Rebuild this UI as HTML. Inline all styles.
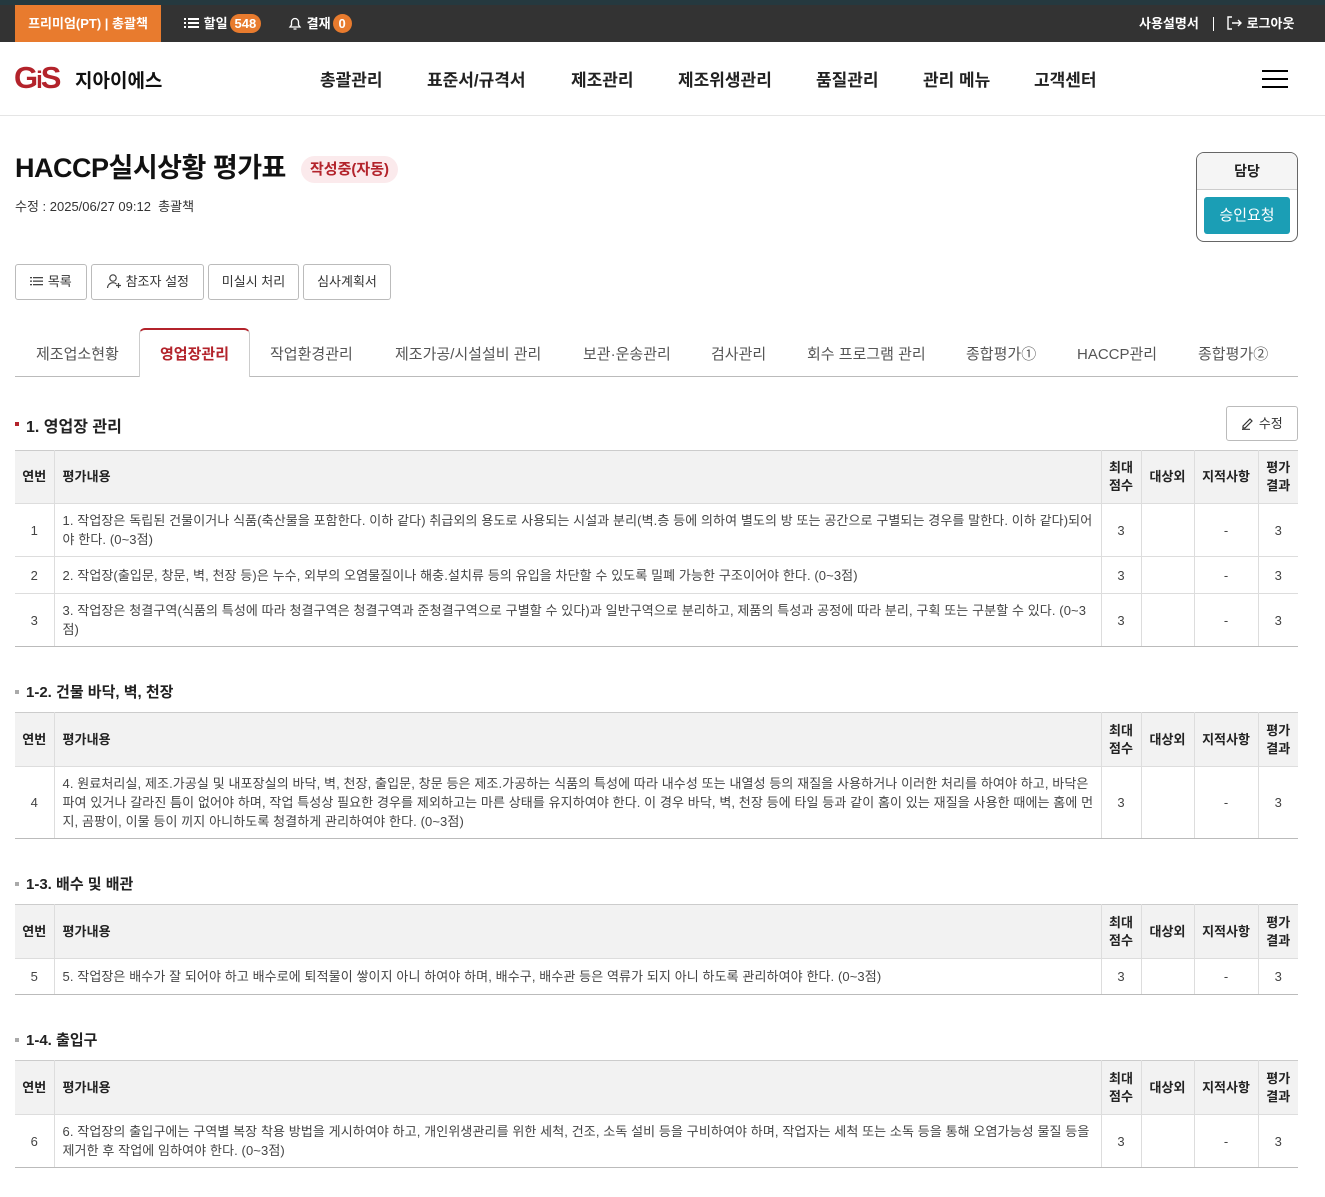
<!DOCTYPE html>
<html><head><meta charset="utf-8">
<style>
*{margin:0;padding:0;box-sizing:border-box}
body{width:1325px;height:1197px;overflow:hidden;background:#fff;font-family:"Liberation Sans","Noto Sans CJK KR",sans-serif;color:#333;position:relative}
.a{position:absolute}
.top{left:0;top:0;width:1325px;height:42px;background:#333;border-top:5px solid #25393f}
.prem{left:15px;top:5px;width:146px;height:37px;background:#e87b2e;color:#fff;font-size:13px;font-weight:bold;line-height:37px;text-align:center}
.tw{color:#fff;font-size:13px;font-weight:bold;line-height:42px;top:3px}
.badge{display:inline-block;background:#e87b2e;color:#fff;border-radius:10px;padding:0 5px;line-height:19px;font-size:13px;margin-left:2px}
.nav{top:66px;font-size:17px;font-weight:bold;color:#222}
.hdrline{left:0;top:115px;width:1325px;height:1px;background:#e5e5e5}
.btn{top:264px;height:36px;border:1px solid #bbb;border-radius:3px;font-size:13px;line-height:34px;text-align:center;color:#333}
.tab{top:343px;font-size:15px;color:#555}
.sec{font-size:16px;font-weight:bold;color:#222}
table{position:absolute;left:15px;width:1283px;border-collapse:collapse;font-size:13px;color:#444}
th{background:#f2f2f2;font-weight:bold;color:#222;border-left:1px solid #ddd;line-height:18px}
td{border-left:1px solid #ddd;border-top:1px solid #ddd;text-align:center;line-height:19px}
th:first-child,td:first-child{border-left:none}
thead tr{border-top:1px solid #ccc}
tbody tr:last-child td{border-bottom:1px solid #bbb}
td.l,th.l{text-align:left;padding-left:8px;letter-spacing:0.1px}
</style></head><body>
<div class="a top"></div>
<div class="a prem">프리미엄(PT) | 총괄책</div>
<div class="a tw" style="left:184px"><svg width="16" height="12" style="vertical-align:-1px" viewBox="0 0 16 12"><g fill="#fff"><rect x="0" y="1" width="2" height="2"/><rect x="4" y="1" width="11" height="2"/><rect x="0" y="5" width="2" height="2"/><rect x="4" y="5" width="11" height="2"/><rect x="0" y="9" width="2" height="2"/><rect x="4" y="9" width="11" height="2"/></g></svg> 할일<span class="badge">548</span></div>
<div class="a tw" style="left:287px"><svg width="16" height="16" style="vertical-align:-3px" viewBox="0 0 16 16"><path d="M3 12h10l-1.5-2V7a3.5 3.5 0 0 0-7 0v3z M6.5 14h3" fill="none" stroke="#fff" stroke-width="1.3"/></svg> 결재<span class="badge" style="padding:0 6px">0</span></div>
<div class="a tw" style="left:1139px">사용설명서</div>
<div class="a" style="left:1213px;top:17px;width:1px;height:14px;background:#fff"></div>
<div class="a tw" style="left:1227px"><svg width="16" height="14" style="vertical-align:-2px" viewBox="0 0 16 14"><path d="M5 1H1v12h4 M5 7h9 M11 4l3 3-3 3" fill="none" stroke="#fff" stroke-width="1.4"/></svg> 로그아웃</div>

<div class="a" style="left:14px;top:60px;font-size:31px;font-weight:bold;color:#b3232b;letter-spacing:-2px;line-height:36px">G<span style="font-size:24px">i</span>S</div>
<div class="a" style="left:75px;top:66px;font-size:19px;font-weight:bold;color:#111">지아이에스</div>
<div class="a nav" style="left:320px">총괄관리</div>
<div class="a nav" style="left:427px">표준서/규격서</div>
<div class="a nav" style="left:571px">제조관리</div>
<div class="a nav" style="left:678px">제조위생관리</div>
<div class="a nav" style="left:816px">품질관리</div>
<div class="a nav" style="left:923px">관리 메뉴</div>
<div class="a nav" style="left:1034px">고객센터</div>
<div class="a" style="left:1262px;top:70px;width:26px;height:2px;background:#000;box-shadow:0 8px 0 #000,0 16px 0 #000"></div>
<div class="a hdrline"></div>

<div class="a" style="left:15px;top:150px;font-size:27px;font-weight:bold;color:#111;line-height:36px;letter-spacing:-0.5px">HACCP실시상황 평가표</div>
<div class="a" style="left:301px;top:156px;height:27px;padding:0 9px;background:#fbeaec;color:#b3232b;border-radius:14px;font-size:15px;font-weight:bold;line-height:27px">작성중(자동)</div>
<div class="a" style="left:15px;top:196px;font-size:13px;color:#333">수정 : 2025/06/27 09:12&nbsp; 총괄책</div>

<div class="a" style="left:1196px;top:152px;width:102px;height:90px;border:1px solid #666;border-radius:8px;overflow:hidden">
<div style="height:37px;background:#f5f5f5;border-bottom:1px solid #ccc;text-align:center;line-height:36px;font-size:14px;font-weight:bold;color:#222">담당</div>
<div style="position:absolute;left:7px;top:44px;width:86px;height:37px;background:#1b9eb5;border-radius:3px;color:#fff;font-size:15px;text-align:center;line-height:37px">승인요청</div>
</div>

<div class="a btn" style="left:15px;width:72px"><svg width="14" height="10" viewBox="0 0 14 10" style="vertical-align:0"><g fill="#444"><rect x="0" y="1" width="2" height="1.3"/><rect x="3" y="1" width="10" height="1.3"/><rect x="0" y="4.5" width="2" height="1.3"/><rect x="3" y="4.5" width="10" height="1.3"/><rect x="0" y="8" width="2" height="1.3"/><rect x="3" y="8" width="10" height="1.3"/></g></svg> 목록</div>
<div class="a btn" style="left:91px;width:113px"><svg width="16" height="16" viewBox="0 0 16 16" style="vertical-align:-3px"><circle cx="7" cy="5" r="3.2" fill="none" stroke="#444" stroke-width="1.2"/><path d="M1.5 15a5.5 5.5 0 0 1 9-4 M12.5 10v5 M10 12.5h5" fill="none" stroke="#444" stroke-width="1.2"/></svg> 참조자 설정</div>
<div class="a btn" style="left:208px;width:91px">미실시 처리</div>
<div class="a btn" style="left:303px;width:88px">심사계획서</div>

<div class="a" style="left:15px;top:376px;width:1283px;height:1px;background:#bbb"></div>
<div class="a" style="left:139px;top:328px;width:111px;height:49px;border:1px solid #ccc;border-top:2px solid #b3232b;border-bottom:none;border-radius:6px 6px 0 0;background:#fff"></div>
<div class="a tab" style="left:36px">제조업소현황</div>
<div class="a tab" style="left:160px;color:#b3232b;font-weight:bold">영업장관리</div>
<div class="a tab" style="left:270px">작업환경관리</div>
<div class="a tab" style="left:395px">제조가공/시설설비 관리</div>
<div class="a tab" style="left:583px">보관·운송관리</div>
<div class="a tab" style="left:711px">검사관리</div>
<div class="a tab" style="left:807px">회수 프로그램 관리</div>
<div class="a tab" style="left:966px">종합평가①</div>
<div class="a tab" style="left:1077px">HACCP관리</div>
<div class="a tab" style="left:1198px">종합평가②</div>

<div class="a" style="left:15px;top:422px;width:4px;height:4px;background:#b3232b"></div>
<div class="a sec" style="left:26px;top:413px">1. 영업장 관리</div>
<div class="a" style="left:1226px;top:406px;width:72px;height:35px;border:1px solid #bbb;border-radius:3px;font-size:13px;line-height:33px;text-align:center"><svg width="14" height="14" viewBox="0 0 14 14" style="vertical-align:-2px"><path d="M2 10l7-7 2 2-7 7H2z M1 13.3h8" fill="none" stroke="#333" stroke-width="1.2"/></svg> 수정</div>

<table style="top:450px">
<colgroup><col style="width:39px"><col style="width:1047px"><col style="width:40px"><col style="width:53px"><col style="width:64px"><col style="width:40px"></colgroup>
<thead><tr style="height:53px"><th>연번</th><th class="l">평가내용</th><th>최대<br>점수</th><th>대상외</th><th>지적사항</th><th>평가<br>결과</th></tr></thead>
<tbody>
<tr style="height:53px"><td>1</td><td class="l">1. 작업장은 독립된 건물이거나 식품(축산물을 포함한다. 이하 같다) 취급외의 용도로 사용되는 시설과 분리(벽.층 등에 의하여 별도의 방 또는 공간으로 구별되는 경우를 말한다. 이하 같다)되어<br>야 한다. (0~3점)</td><td>3</td><td></td><td>-</td><td>3</td></tr>
<tr style="height:37px"><td>2</td><td class="l">2. 작업장(출입문, 창문, 벽, 천장 등)은 누수, 외부의 오염물질이나 해충.설치류 등의 유입을 차단할 수 있도록 밀폐 가능한 구조이어야 한다. (0~3점)</td><td>3</td><td></td><td>-</td><td>3</td></tr>
<tr style="height:53px"><td>3</td><td class="l">3. 작업장은 청결구역(식품의 특성에 따라 청결구역은 청결구역과 준청결구역으로 구별할 수 있다)과 일반구역으로 분리하고, 제품의 특성과 공정에 따라 분리, 구획 또는 구분할 수 있다. (0~3<br>점)</td><td>3</td><td></td><td>-</td><td>3</td></tr>
</tbody></table>

<div class="a" style="left:15px;top:690px;width:4px;height:4px;background:#aaa"></div>
<div class="a sec" style="left:26px;top:681px;font-size:15px">1-2. 건물 바닥, 벽, 천장</div>
<table style="top:712px">
<colgroup><col style="width:39px"><col style="width:1047px"><col style="width:40px"><col style="width:53px"><col style="width:64px"><col style="width:40px"></colgroup>
<thead><tr style="height:54px"><th>연번</th><th class="l">평가내용</th><th>최대<br>점수</th><th>대상외</th><th>지적사항</th><th>평가<br>결과</th></tr></thead>
<tbody>
<tr style="height:72px"><td>4</td><td class="l">4. 원료처리실, 제조.가공실 및 내포장실의 바닥, 벽, 천장, 출입문, 창문 등은 제조.가공하는 식품의 특성에 따라 내수성 또는 내열성 등의 재질을 사용하거나 이러한 처리를 하여야 하고, 바닥은<br>파여 있거나 갈라진 틈이 없어야 하며, 작업 특성상 필요한 경우를 제외하고는 마른 상태를 유지하여야 한다. 이 경우 바닥, 벽, 천장 등에 타일 등과 같이 홈이 있는 재질을 사용한 때에는 홈에 먼<br>지, 곰팡이, 이물 등이 끼지 아니하도록 청결하게 관리하여야 한다. (0~3점)</td><td>3</td><td></td><td>-</td><td>3</td></tr>
</tbody></table>

<div class="a" style="left:15px;top:882px;width:4px;height:4px;background:#aaa"></div>
<div class="a sec" style="left:26px;top:873px;font-size:15px">1-3. 배수 및 배관</div>
<table style="top:904px">
<colgroup><col style="width:39px"><col style="width:1047px"><col style="width:40px"><col style="width:53px"><col style="width:64px"><col style="width:40px"></colgroup>
<thead><tr style="height:54px"><th>연번</th><th class="l">평가내용</th><th>최대<br>점수</th><th>대상외</th><th>지적사항</th><th>평가<br>결과</th></tr></thead>
<tbody>
<tr style="height:36px"><td>5</td><td class="l">5. 작업장은 배수가 잘 되어야 하고 배수로에 퇴적물이 쌓이지 아니 하여야 하며, 배수구, 배수관 등은 역류가 되지 아니 하도록 관리하여야 한다. (0~3점)</td><td>3</td><td></td><td>-</td><td>3</td></tr>
</tbody></table>

<div class="a" style="left:15px;top:1038px;width:4px;height:4px;background:#aaa"></div>
<div class="a sec" style="left:26px;top:1029px;font-size:15px">1-4. 출입구</div>
<table style="top:1060px">
<colgroup><col style="width:39px"><col style="width:1047px"><col style="width:40px"><col style="width:53px"><col style="width:64px"><col style="width:40px"></colgroup>
<thead><tr style="height:54px"><th>연번</th><th class="l">평가내용</th><th>최대<br>점수</th><th>대상외</th><th>지적사항</th><th>평가<br>결과</th></tr></thead>
<tbody>
<tr style="height:53px"><td>6</td><td class="l">6. 작업장의 출입구에는 구역별 복장 착용 방법을 게시하여야 하고, 개인위생관리를 위한 세척, 건조, 소독 설비 등을 구비하여야 하며, 작업자는 세척 또는 소독 등을 통해 오염가능성 물질 등을<br>제거한 후 작업에 임하여야 한다. (0~3점)</td><td>3</td><td></td><td>-</td><td>3</td></tr>
</tbody></table>
</body></html>
